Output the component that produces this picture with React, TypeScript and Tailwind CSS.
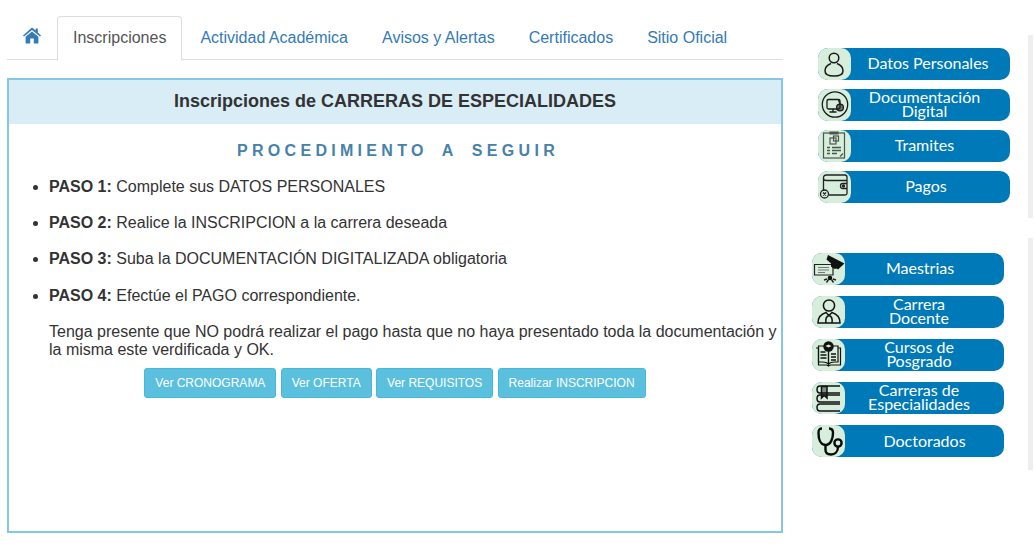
import React from "react";

const sans = { fontFamily: '"Liberation Sans", Arial, sans-serif' };

function HomeIcon() {
  return (
    <svg width="18" height="17" viewBox="0 0 18 17" fill="#337ab7">
      <path d="M9 0.5 L12.6 3.6 V1.5 H14.8 V5.5 L18 8.4 L17 9.6 L9 2.9 L1 9.6 L0 8.4 Z" />
      <path d="M9 4.4 L15.4 9.7 V16.5 H10.8 V11.5 H7.2 V16.5 H2.6 V9.7 Z" />
    </svg>
  );
}

function PersonIcon() {
  return (
    <svg viewBox="0 0 33 32" className="h-8 w-[33px]" fill="none" stroke="#1a1a1a" strokeWidth="1.5">
      <circle cx="16" cy="10" r="4.8" />
      <path d="M13 15.5 C9 17 7 19.5 7 23 C7 26.5 11 28 16 28 C21 28 25 26.5 25 23 C25 19.5 23 17 19 15.5" />
    </svg>
  );
}

function DigitalIcon() {
  return (
    <svg viewBox="0 0 33 32" className="h-8 w-[33px]" fill="none" stroke="#1a1a1a" strokeWidth="1.3">
      <circle cx="17" cy="15.5" r="12.7" />
      <rect x="9" y="10.5" width="13" height="9.5" rx="1.5" />
      <path d="M15 20v2.5M11.5 23h7" />
      <circle cx="22" cy="18.5" r="3.4" fill="#1a1a1a" fillOpacity="0.55" />
      <path d="M20.5 11l1.5 4" />
    </svg>
  );
}

function TramitesIcon() {
  return (
    <svg viewBox="0 0 33 32" className="h-8 w-[33px]" fill="none" stroke="#4a564c" strokeWidth="1.2">
      <rect x="5.5" y="3" width="21" height="25" />
      <path d="M12 2h8v2h-8z" fill="#4a564c" />
      <rect x="12" y="8" width="6" height="6" />
      <rect x="15.5" y="6" width="5" height="5" />
      <path d="M9 17.5h3M14 17.5h9M9 20.5h3M14 20.5h9M9 23.5h3M14 23.5h5" strokeWidth="1.5" />
      <path d="M22 26.5l3-3" />
    </svg>
  );
}

function WalletIcon() {
  return (
    <svg viewBox="0 0 33 32" className="h-8 w-[33px]" fill="none" stroke="#222" strokeWidth="1.3">
      <path d="M5.5 20V7C5.5 5 6.5 4 8.5 4H27C28.5 4 29 5 29 6.5V22.5C29 23.5 28 24 27 24H11" />
      <path d="M5.5 7.5C5.5 9 7 9.5 8.5 9.5H29" />
      <path d="M29 12.5H24.5C23 12.5 22.5 13.5 22.5 15S23 17.5 24.5 17.5H29" />
      <circle cx="25.5" cy="15" r="1" fill="#222" />
      <circle cx="6.5" cy="23" r="4" />
      <path d="M5 21.5l3 3M8 21.5l-3 3" />
    </svg>
  );
}

function MaestriasIcon() {
  return (
    <svg viewBox="0 0 33 32" className="h-8 w-[33px]" fill="none" stroke="#222" strokeWidth="1">
      <path d="M2.5 11.5H21V22H2.5Z" strokeWidth="1.2" />
      <path d="M6 14.5H17M6 17H17M6 19.5H13" stroke="#777" />
      <path d="M16 2L32.5 10.5L26 16.5L14.5 6.5Z" fill="#111" stroke="none" />
      <path d="M19 8L19 13.5C22 16.5 24.5 16.5 27 14Z" fill="#111" stroke="none" />
      <circle cx="18" cy="25" r="2.3" fill="#111" stroke="none" />
      <path d="M14.5 29.5l2-3M21.5 29.5l-2-3M12 27l3-1M24 27l-3-1" strokeWidth="1.4" />
    </svg>
  );
}

function DocenteIcon() {
  return (
    <svg viewBox="0 0 33 32" className="h-8 w-[33px]" fill="none" stroke="#111" strokeWidth="1.5">
      <circle cx="17" cy="9.5" r="5.6" />
      <path d="M6 27C6 20.5 9 18 14 16.5L17 19.5L20 16.5C25 18 28 20.5 28 27Z" />
      <path d="M17 19.5C14 20.5 13.5 24 14 27M17 19.5C20 20.5 20.5 24 20 27" />
    </svg>
  );
}

function PosgradoIcon() {
  return (
    <svg viewBox="0 0 33 32" className="h-8 w-[33px]" fill="none" stroke="#111" strokeWidth="1.2">
      <path d="M4 9H6.5V26H14C15.5 26 16.5 27 16.5 27C16.5 27 17.5 26 19 26H28.5V9H26" />
      <path d="M6.5 7H10.5C13.5 7 15.5 8 16.5 10V25C15.5 24 13.5 23 10.5 23H6.5Z" />
      <path d="M26 7H22.5C19.5 7 17.5 8 16.5 10V25C17.5 24 19.5 23 22.5 23H26Z" />
      <path d="M8.5 13h5M8.5 16h6M8.5 19h6M19 15h5M19 18h5M19 21h5" strokeWidth="1.4" />
      <circle cx="16.5" cy="7.5" r="5.2" fill="#111" stroke="none" />
      <path d="M13.5 7L16.5 5.5L19.5 7L16.5 8.5Z" fill="#d6eedb" stroke="none" />
    </svg>
  );
}

function BooksIcon() {
  return (
    <svg viewBox="0 0 33 32" className="h-8 w-[33px]" fill="none" stroke="#111" strokeWidth="1.5">
      <path d="M28 4H8C5.5 4 5 5.5 5 7.5S5.5 11 8 11H28" />
      <path d="M28 13H8C5.5 13 5 14.5 5 16.5S5.5 20 8 20H28" />
      <path d="M28 22H8C5.5 22 5 23.5 5 25.5S5.5 29 8 29H28" />
      <path d="M9.5 4.5H15V16L12.2 13.5L9.5 16Z" fill="#111" fillOpacity="0.45" />
    </svg>
  );
}

function StethoscopeIcon() {
  return (
    <svg viewBox="0 0 33 32" className="h-8 w-[33px]" fill="none" stroke="#0a0a0a" strokeWidth="2.4">
      <path d="M10 3.5C7 3.5 6.5 5 6.5 8C6.5 13 8 20 13.5 20C19 20 21 13 21 8C21 5 20 3.5 17 3.5" />
      <path d="M13.5 20V25C13.5 28 16 29.5 19 29.5C23 29.5 26 26.5 26 22" />
      <circle cx="26" cy="18" r="3.6" />
    </svg>
  );
}

function SideButton({
  icon,
  lines,
  shift,
}: {
  icon: React.ReactNode;
  lines: string[];
  shift: string;
}) {
  return (
    <a className="flex h-8 w-[192px] items-stretch rounded-[10px] bg-[#0079b8] text-white">
      <span className="flex h-8 w-[33px] shrink-0 items-center justify-center rounded-[10px] bg-[#d6eedb]">
        {icon}
      </span>
      <span
        className={`flex flex-1 flex-col items-center justify-center text-center text-base leading-[14px] ${shift}`}
        style={{ fontFamily: "Lato, sans-serif" }}
      >
        {lines.map((l) => (
          <span key={l}>{l}</span>
        ))}
      </span>
    </a>
  );
}

const topLinks = [
  { icon: <PersonIcon />, lines: ["Datos Personales"], shift: "pr-[5px] pb-[2px]" },
  { icon: <DigitalIcon />, lines: ["Documentación", "Digital"], shift: "pr-[12px] pb-[2px]" },
  { icon: <TramitesIcon />, lines: ["Tramites"], shift: "pr-[12px] pb-[2px]" },
  { icon: <WalletIcon />, lines: ["Pagos"], shift: "pr-[9px] pb-[2px]" },
];

const bottomLinks = [
  { icon: <MaestriasIcon />, lines: ["Maestrias"], shift: "pr-[9px] pb-[2px]" },
  { icon: <DocenteIcon />, lines: ["Carrera", "Docente"], shift: "pr-[11px] pb-[2px]" },
  { icon: <PosgradoIcon />, lines: ["Cursos de", "Posgrado"], shift: "pr-[11px] pb-[2px]" },
  { icon: <BooksIcon />, lines: ["Carreras de", "Especialidades"], shift: "pr-[11px] pb-[2px]" },
  { icon: <StethoscopeIcon />, lines: ["Doctorados"], shift: "pr-0" },
];

const pasos = [
  ["PASO 1:", "Complete sus DATOS PERSONALES"],
  ["PASO 2:", "Realice la INSCRIPCION a la carrera deseada"],
  ["PASO 3:", "Suba la DOCUMENTACIÓN DIGITALIZADA obligatoria"],
  ["PASO 4:", "Efectúe el PAGO correspondiente."],
];

const tabs = ["Actividad Académica", "Avisos y Alertas", "Certificados", "Sitio Oficial"];
const actions = ["Ver CRONOGRAMA", "Ver OFERTA", "Ver REQUISITOS", "Realizar INSCRIPCION"];

export default function App() {
  return (
    <div className="flex h-[555px] w-[1035px] overflow-hidden bg-white text-[#333]" style={sans}>
      <div className="ml-[7px] w-[776px] shrink-0 pt-4">
        <ul className="flex h-[44px] gap-[2px] border-b border-[#ddd] text-base leading-[22px]">
          <li className="flex h-[44px] w-[48px] items-start pl-[16px] pt-[11px]">
            <HomeIcon />
          </li>
          <li className="h-[45px] rounded-t border border-[#ddd] border-b-white bg-white px-[15px] pt-[10px] text-[#555]">
            Inscripciones
          </li>
          {tabs.map((t) => (
            <li key={t} className="h-[44px] px-4 pt-[11px] text-[#337ab7]">
              {t}
            </li>
          ))}
        </ul>

        <div className="mt-[18px] h-[455px] border-2 border-[#85c5e5]">
          <h3 className="flex h-[44px] items-center justify-center bg-[#d9edf7] pb-[2px] text-[18px] font-bold text-[#333]">
            Inscripciones de CARRERAS DE ESPECIALIDADES
          </h3>
          <div className="pt-[18px] pl-[40px] pr-1">
            <h4 className="-ml-[30px] text-center text-base leading-[18px] font-bold tracking-[4.3px] [word-spacing:6px] text-[#4682a9]">
              PROCEDIMIENTO A SEGUIR
            </h4>
            <ul className="mt-[18px] list-disc text-base leading-[18px]">
              {pasos.map(([p, t], i) => (
                <li key={p} className={i === 2 ? "mb-[19px]" : "mb-[18px]"}>
                  <b>{p}</b> {t}
                </li>
              ))}
            </ul>
            <p className="text-base leading-[18px]">
              Tenga presente que NO podrá realizar el pago hasta que no haya presentado toda la
              documentación y la misma este verdificada y OK.
            </p>
            <div className="mt-[9px] -ml-[40px] flex justify-center gap-[4.4px] pl-[4px]">
              {actions.map((a) => (
                <button
                  key={a}
                  className="h-[30px] rounded-[3px] border border-[#46b8da] bg-[#5bc0de] px-[10px] text-xs text-white"
                >
                  {a}
                </button>
              ))}
            </div>
          </div>
        </div>
      </div>

      <div className="relative flex-1">
        <div className="ml-[35px] flex flex-col gap-[9px] pt-12">
          {topLinks.map((l) => (
            <SideButton key={l.lines[0]} {...l} />
          ))}
        </div>
        <div className="mt-[50px] ml-[29px] flex flex-col gap-[11px]">
          {bottomLinks.map((l) => (
            <SideButton key={l.lines[0]} {...l} />
          ))}
        </div>
        <div className="absolute top-[35px] left-[245px] h-[183px] w-[5px] bg-[#eeeeee]" />
        <div className="absolute top-[238px] left-[245px] h-[232px] w-[5px] bg-[#eeeeee]" />
      </div>
    </div>
  );
}
